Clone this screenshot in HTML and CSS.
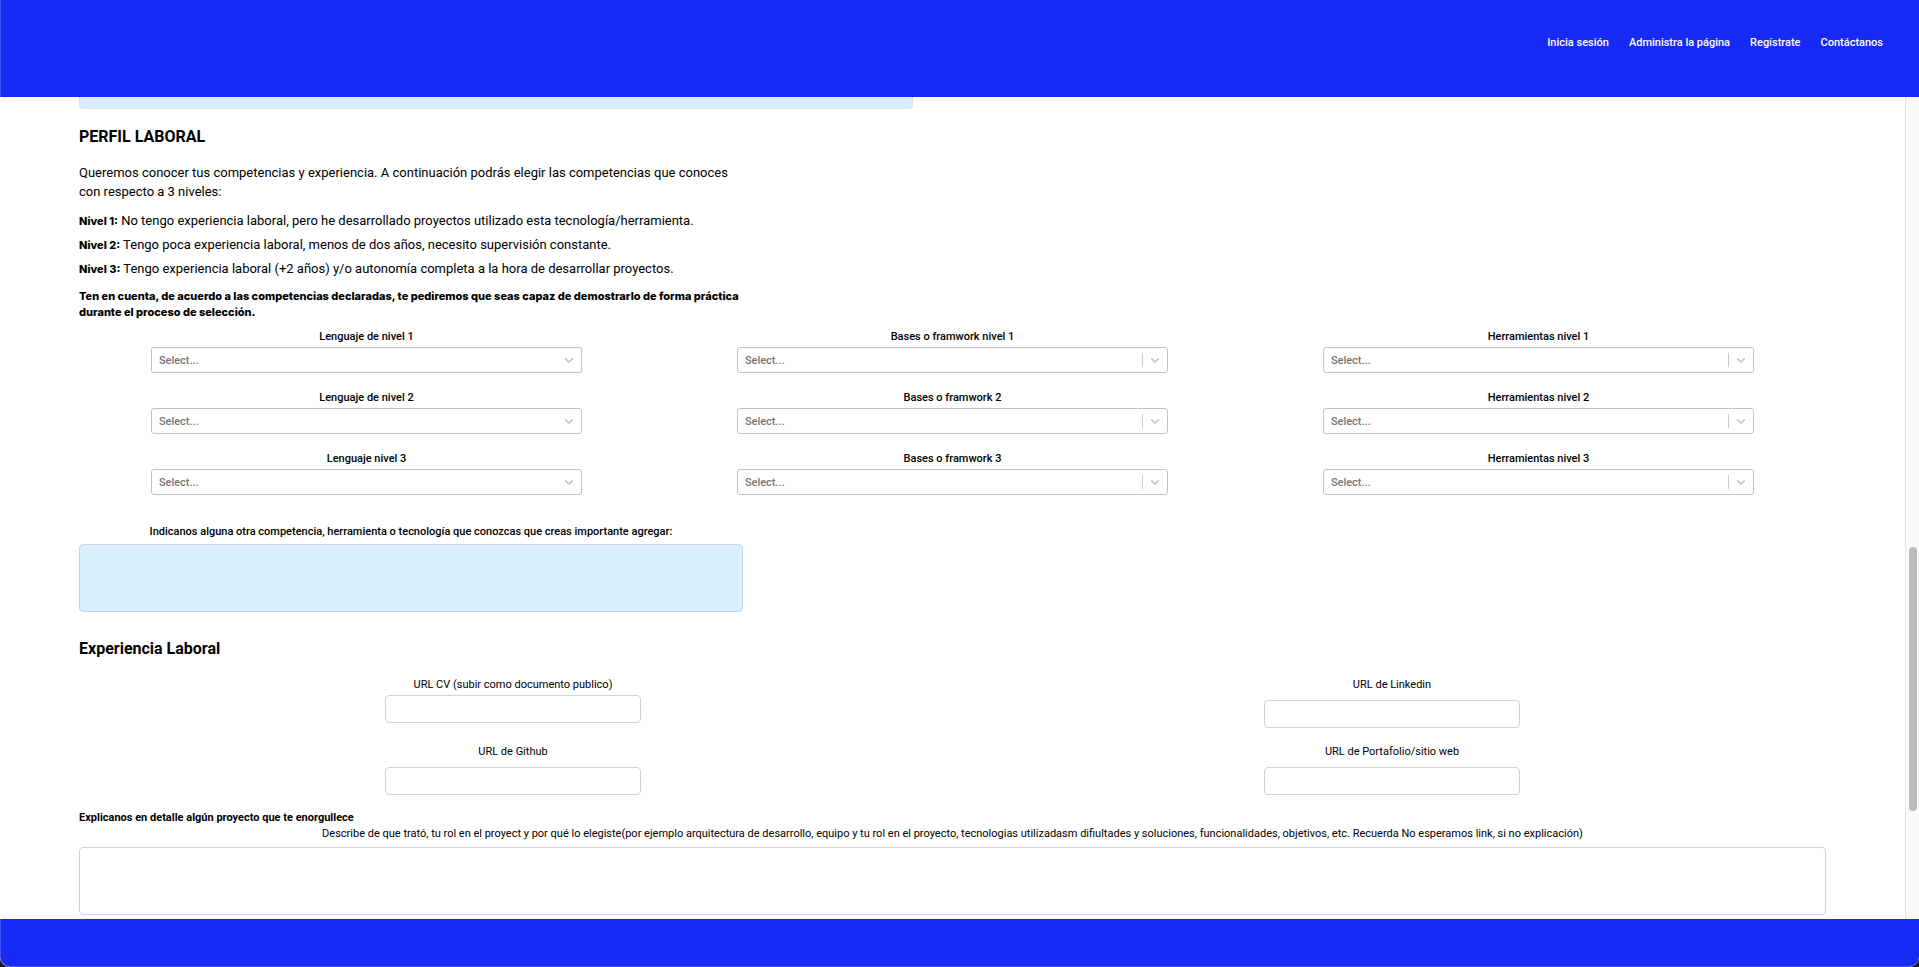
FILE: index.html
```
<!DOCTYPE html>
<html lang="es">
<head>
<meta charset="utf-8">
<meta name="viewport" content="width=device-width, initial-scale=1">
<title>Perfil laboral</title>
<link rel="stylesheet" href="styles.css">
</head>
<body>
<svg class="sprite" aria-hidden="true">
  <symbol id="chevron" viewBox="0 0 20 20"><path d="M4.516 7.548c0.436-0.446 1.043-0.481 1.576 0l3.908 3.747 3.908-3.747c0.533-0.481 1.141-0.446 1.574 0 0.436 0.445 0.408 1.197 0 1.615-0.406 0.418-4.695 4.502-4.695 4.502-0.217 0.223-0.502 0.335-0.787 0.335s-0.57-0.112-0.789-0.335c0 0-4.287-4.084-4.695-4.502s-0.436-1.17 0-1.615z"/></symbol>
</svg>
<div class="app">
  <header class="header">
    <nav class="nav">
      <a href="#">Inicia sesión</a>
      <a href="#">Administra la página</a>
      <a href="#">Regístrate</a>
      <a href="#">Contáctanos</a>
    </nav>
  </header>
  <div class="viewport">
    <main class="content">
      <textarea class="area area-previous" aria-label="Respuesta anterior"></textarea>

      <section>
        <h2 class="title">PERFIL LABORAL</h2>
        <div class="intro">
          <p class="lead">Queremos conocer tus competencias y experiencia. A continuación podrás elegir las competencias que conoces con respecto a 3 niveles:</p>
          <p class="level"><strong>Nivel 1:</strong> No tengo experiencia laboral, pero he desarrollado proyectos utilizado esta tecnología/herramienta.</p>
          <p class="level"><strong>Nivel 2:</strong> Tengo poca experiencia laboral, menos de dos años, necesito supervisión constante.</p>
          <p class="level"><strong>Nivel 3:</strong> Tengo experiencia laboral (+2 años) y/o autonomía completa a la hora de desarrollar proyectos.</p>
          <p class="notice">Ten en cuenta, de acuerdo a las competencias declaradas, te pediremos que seas capaz de demostrarlo de forma práctica durante el proceso de selección.</p>
        </div>

        <div class="skills">
          <div class="field"><label for="l1">Lenguaje de nivel 1</label><div class="picker"><select id="l1"><option>Select...</option></select><span class="arrow"><svg><use href="#chevron"/></svg></span></div></div>
          <div class="field"><label for="b1">Bases o framwork nivel 1</label><div class="picker"><select id="b1"><option>Select...</option></select><span class="arrow divided"><svg><use href="#chevron"/></svg></span></div></div>
          <div class="field"><label for="h1">Herramientas nivel 1</label><div class="picker"><select id="h1"><option>Select...</option></select><span class="arrow divided"><svg><use href="#chevron"/></svg></span></div></div>
          <div class="field"><label for="l2">Lenguaje de nivel 2</label><div class="picker"><select id="l2"><option>Select...</option></select><span class="arrow"><svg><use href="#chevron"/></svg></span></div></div>
          <div class="field"><label for="b2">Bases o framwork 2</label><div class="picker"><select id="b2"><option>Select...</option></select><span class="arrow divided"><svg><use href="#chevron"/></svg></span></div></div>
          <div class="field"><label for="h2">Herramientas nivel 2</label><div class="picker"><select id="h2"><option>Select...</option></select><span class="arrow divided"><svg><use href="#chevron"/></svg></span></div></div>
          <div class="field"><label for="l3">Lenguaje nivel 3</label><div class="picker"><select id="l3"><option>Select...</option></select><span class="arrow"><svg><use href="#chevron"/></svg></span></div></div>
          <div class="field"><label for="b3">Bases o framwork 3</label><div class="picker"><select id="b3"><option>Select...</option></select><span class="arrow divided"><svg><use href="#chevron"/></svg></span></div></div>
          <div class="field"><label for="h3">Herramientas nivel 3</label><div class="picker"><select id="h3"><option>Select...</option></select><span class="arrow divided"><svg><use href="#chevron"/></svg></span></div></div>
        </div>

        <div class="other">
          <label for="other">Indicanos alguna otra competencia, herramienta o tecnología que conozcas que creas importante agregar:</label>
          <textarea class="area area-blue" id="other"></textarea>
        </div>
      </section>

      <section>
        <h2 class="title">Experiencia Laboral</h2>
        <div class="links">
          <div class="link-field link-field-tight"><label for="cv">URL CV (subir como documento publico)</label><input type="url" id="cv"></div>
          <div class="link-field"><label for="linkedin">URL de Linkedin</label><input type="url" id="linkedin"></div>
          <div class="link-field"><label for="github">URL de Github</label><input type="url" id="github"></div>
          <div class="link-field"><label for="web">URL de Portafolio/sitio web</label><input type="url" id="web"></div>
        </div>
        <div class="project">
          <h3 class="subtitle">Explicanos en detalle algún proyecto que te enorgullece</h3>
          <label for="project">Describe de que trató, tu rol en el proyect y por qué lo elegiste(por ejemplo arquitectura de desarrollo, equipo y tu rol en el proyecto, tecnologias utilizadasm difiultades y soluciones, funcionalidades, objetivos, etc. Recuerda No esperamos link, si no explicación)</label>
          <textarea class="area" id="project"></textarea>
        </div>
      </section>
    </main>
    <div class="scrollbar" aria-hidden="true"><div class="thumb"></div></div>
  </div>
  <footer class="footer"></footer>
</div>
</body>
</html>
```
FILE: styles.css
```
* { box-sizing: border-box; }

body {
  margin: 0;
  background: #17171b;
  color: #000;
  font: 500 11px/16px Roboto, "Liberation Sans", sans-serif;
}

h2, h3, p { margin: 0; }

input, select, textarea { font: inherit; margin: 0; }

.sprite { display: none; }

.app {
  display: flex;
  flex-direction: column;
  height: 100vh;
  overflow: hidden;
  background: #fff;
  border-radius: 0 0 10px 10px;
}

.header {
  flex: none;
  padding: 35px 36px 46px;
  background: #1729f5;
  border-left: 1px solid #4452f7;
}

.nav {
  display: flex;
  justify-content: flex-end;
  gap: 20px;
}

.nav a { color: #fff; text-decoration: none; }

.viewport {
  flex: 1;
  display: flex;
  min-height: 0;
  overflow: hidden;
}

.content {
  flex: 1;
  min-width: 0;
  padding: 0 79px;
}

.area {
  display: block;
  width: 100%;
  height: 68px;
  padding: 6px;
  border: 1px solid #ced4da;
  border-radius: 4px;
  background: #fff;
  resize: none;
}

.area-blue, .area-previous { background: #d9effe; }

/* Only the lower edge shows below the fixed header. */
.area-previous {
  width: 834px;
  margin-top: -56px;
  border-color: #dee2e6;
}

.title {
  padding-top: 16px;
  font-size: 16px;
  font-weight: 700;
  line-height: 24px;
}

.intro { width: 38%; }

.lead {
  margin: 14px 0 8px;
  font-size: 13px;
  font-weight: 400;
  line-height: 19px;
}

.level {
  font-size: 13px;
  font-weight: 400;
  line-height: 24px;
}

.level strong {
  font-family: Inter, "Liberation Sans", sans-serif;
  font-size: 11px;
  font-weight: 800;
  line-height: 16px;
}

.notice {
  margin-top: 7px;
  font-family: Inter, "Liberation Sans", sans-serif;
  font-weight: 800;
}

.skills {
  display: grid;
  grid-template-columns: repeat(3, 1fr);
  gap: 17px 11px;
  padding-top: 9px;
}

.field {
  display: flex;
  flex-direction: column;
  align-items: center;
  gap: 2px;
}

.picker {
  display: grid;
  grid-template-columns: 1fr 26px;
  width: 75%;
}

.picker select {
  grid-area: 1 / 1 / 2 / 3;
  height: 26px;
  padding: 1px 7px 0;
  appearance: none;
  border: 1px solid #c3c3c3;
  border-radius: 3px;
  background: #fff;
  color: #777;
}

.arrow {
  grid-area: 1 / 2 / 2 / 3;
  display: flex;
  align-items: center;
  justify-content: center;
  margin: 6px 0;
  padding-right: 1px;
  pointer-events: none;
}

.arrow svg { width: 14px; height: 14px; fill: #c3c3c3; }

.divided { border-left: 1px solid #ccc; }

.other {
  display: flex;
  flex-direction: column;
  align-items: center;
  gap: 4px;
  width: 38%;
  padding: 29px 0 9px;
}

.links {
  display: grid;
  grid-template-columns: repeat(2, 1fr);
  gap: 16px 11px;
  padding-top: 16px;
  font-weight: 400;
}

.link-field {
  display: flex;
  flex-direction: column;
  align-items: center;
  gap: 7px;
}

.link-field-tight { gap: 2px; }

.link-field input {
  width: 256px;
  height: 28px;
  padding: 0 8px;
  border: 1px solid #ced4da;
  border-radius: 4px;
}

.project {
  padding-top: 15px;
  text-align: center;
  font-weight: 400;
}

.project label { display: block; margin-bottom: 5px; }

.subtitle {
  text-align: left;
  font-size: 11px;
  font-weight: 700;
}

.scrollbar {
  flex: none;
  width: 14px;
  padding: 450px 2px 0 3px;
  border-left: 1px solid #e4e4e4;
  background: #fafafa;
}

.thumb {
  height: 264px;
  border-radius: 4px;
  background: #bcbcbc;
}

.footer {
  flex: none;
  padding-top: 47px;
  background: #1729f5;
  border-left: 1px solid #4452f7;
  border-bottom: 1px solid #4452f7;
  border-radius: 0 0 10px 10px;
}
```
